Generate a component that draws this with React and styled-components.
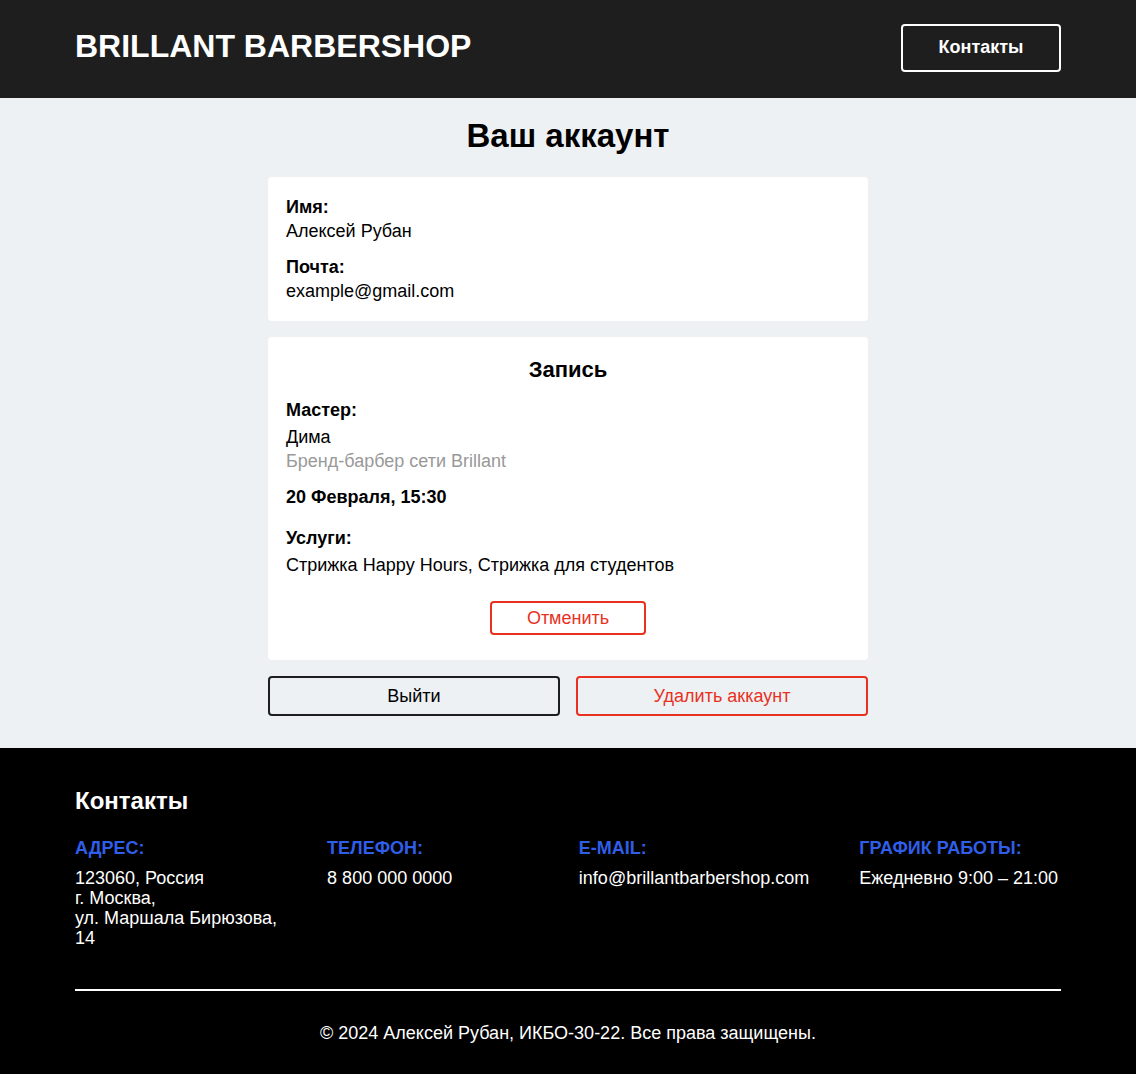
import styled, { createGlobalStyle } from 'styled-components';

const GlobalStyle = createGlobalStyle`
  * { box-sizing: border-box; }
  body {
    margin: 0;
    font-family: "Liberation Sans", Arial, Helvetica, sans-serif;
    font-size: 18px;
    color: #000;
    background: #000;
  }
  p, h1, h2, h3 { margin: 0; }
`;

const App = () => {
  return (
    <>
      <GlobalStyle />
      <Header>
        <Container className="row">
          <Logo>BRILLANT BARBERSHOP</Logo>
          <HeaderButton>Контакты</HeaderButton>
        </Container>
      </Header>

      <Main>
        <Title>Ваш аккаунт</Title>
        <Column>
          <Card>
            <Field>
              <Label>Имя:</Label>
              <Value>Алексей Рубан</Value>
            </Field>
            <Field>
              <Label>Почта:</Label>
              <Value>example@gmail.com</Value>
            </Field>
          </Card>

          <Card $bottom={25}>
            <CardTitle>Запись</CardTitle>
            <Label $gap={3}>Мастер:</Label>
            <Value>Дима</Value>
            <Muted>Бренд-барбер сети Brillant</Muted>
            <DateLine>20 Февраля, 15:30</DateLine>
            <Label $gap={3} $top={17}>Услуги:</Label>
            <Value>Стрижка Happy Hours, Стрижка для студентов</Value>
            <CancelRow>
              <OutlineButton $danger $w={156} $h={34}>Отменить</OutlineButton>
            </CancelRow>
          </Card>

          <Actions>
            <OutlineButton $h={40}>Выйти</OutlineButton>
            <OutlineButton $danger $h={40}>Удалить аккаунт</OutlineButton>
          </Actions>
        </Column>
      </Main>

      <Footer>
        <Container>
          <FooterTitle>Контакты</FooterTitle>
          <ContactGrid>
            <ContactCol>
              <ContactLabel>Адрес:</ContactLabel>
              <ContactText>
                123060, Россия<br />
                г. Москва,<br />
                ул. Маршала Бирюзова,<br />
                14
              </ContactText>
            </ContactCol>
            <ContactCol>
              <ContactLabel>Телефон:</ContactLabel>
              <ContactText>8 800 000 0000</ContactText>
            </ContactCol>
            <ContactCol>
              <ContactLabel>E-mail:</ContactLabel>
              <ContactText>info@brillantbarbershop.com</ContactText>
            </ContactCol>
            <ContactCol>
              <ContactLabel>График работы:</ContactLabel>
              <ContactText>Ежедневно 9:00 – 21:00</ContactText>
            </ContactCol>
          </ContactGrid>
          <Divider />
          <Copyright>© 2024 Алексей Рубан, ИКБО-30-22. Все права защищены.</Copyright>
        </Container>
      </Footer>
    </>
  );
};

export default App;

const Container = styled.div`
  width: 986px;
  margin: 0 auto;

  &.row {
    display: flex;
    align-items: center;
    justify-content: space-between;
  }
`;

const Header = styled.header`
  height: 98px;
  background-color: #1e1e1e;
  display: flex;
  align-items: center;
  padding-bottom: 3px;
`;

const Logo = styled.div`
  color: #fff;
  font-size: 32px;
  font-weight: 700;
  line-height: 36px;
  margin-top: -4px;
`;

const HeaderButton = styled.button`
  width: 160px;
  height: 48px;
  border: 2px solid #fff;
  border-radius: 4px;
  background: transparent;
  color: #fff;
  font-family: inherit;
  font-size: 18px;
  font-weight: 700;
  cursor: pointer;
`;

const Main = styled.main`
  height: 650px;
  background-color: #edf1f4;
  padding: 18px 0 32px;
`;

const Title = styled.h1`
  text-align: center;
  font-size: 33px;
  font-weight: 700;
  line-height: 38px;
  padding-top: 1px;
  margin-bottom: 22px;
`;

const Column = styled.div`
  width: 600px;
  margin: 0 auto;
  display: flex;
  flex-direction: column;
  gap: 16px;
`;

const Card = styled.section`
  background: #fff;
  border-radius: 4px;
  padding: 18px 18px ${(p) => p.$bottom || 18}px;
  display: flex;
  flex-direction: column;
`;

const Field = styled.div`
  & + & {
    margin-top: 12px;
  }
`;

const Label = styled.p`
  font-weight: 700;
  line-height: 24px;
  margin-top: ${(p) => p.$top || 0}px;
  margin-bottom: ${(p) => p.$gap || 0}px;
`;

const Value = styled.p`
  line-height: 24px;
`;

const Muted = styled.p`
  line-height: 24px;
  color: #999;
`;

const CardTitle = styled.h2`
  text-align: center;
  font-size: 22px;
  font-weight: 700;
  line-height: 30px;
  margin-bottom: 13px;
`;

const DateLine = styled.p`
  font-weight: 700;
  line-height: 24px;
  margin-top: 12px;
`;

const CancelRow = styled.div`
  display: flex;
  justify-content: center;
  margin-top: 24px;
`;

const OutlineButton = styled.button`
  width: ${(p) => (p.$w ? `${p.$w}px` : '100%')};
  height: ${(p) => p.$h}px;
  border: 2px solid ${(p) => (p.$danger ? '#e8321f' : '#1e1e1e')};
  border-radius: 4px;
  background: ${(p) => (p.$danger ? '#fff' : 'transparent')};
  color: ${(p) => (p.$danger ? '#e8321f' : '#000')};
  font-family: inherit;
  font-size: 18px;
  cursor: pointer;
`;

const Actions = styled.div`
  display: grid;
  grid-template-columns: 1fr 1fr;
  gap: 16px;

  ${OutlineButton}:last-child {
    background: transparent;
  }
`;

const Footer = styled.footer`
  height: 326px;
  background: #000;
  color: #fff;
  padding: 39px 0 29px;
`;

const FooterTitle = styled.h2`
  font-size: 24px;
  font-weight: 700;
  line-height: 28px;
  margin-bottom: 22px;
`;

const ContactGrid = styled.div`
  display: flex;
  gap: 50px;
  height: 111px;
`;

const ContactCol = styled.div`
  flex: 1 1 0;
`;

const ContactLabel = styled.p`
  color: #2f5ee8;
  font-weight: 700;
  text-transform: uppercase;
  line-height: 22px;
  margin-bottom: 9px;
`;

const ContactText = styled.p`
  line-height: 20px;
  white-space: nowrap;
`;

const Divider = styled.hr`
  border: none;
  height: 2px;
  background: #fff;
  margin: 41px 0 0;
`;

const Copyright = styled.p`
  text-align: center;
  line-height: 24px;
  padding-top: 30px;
`;
